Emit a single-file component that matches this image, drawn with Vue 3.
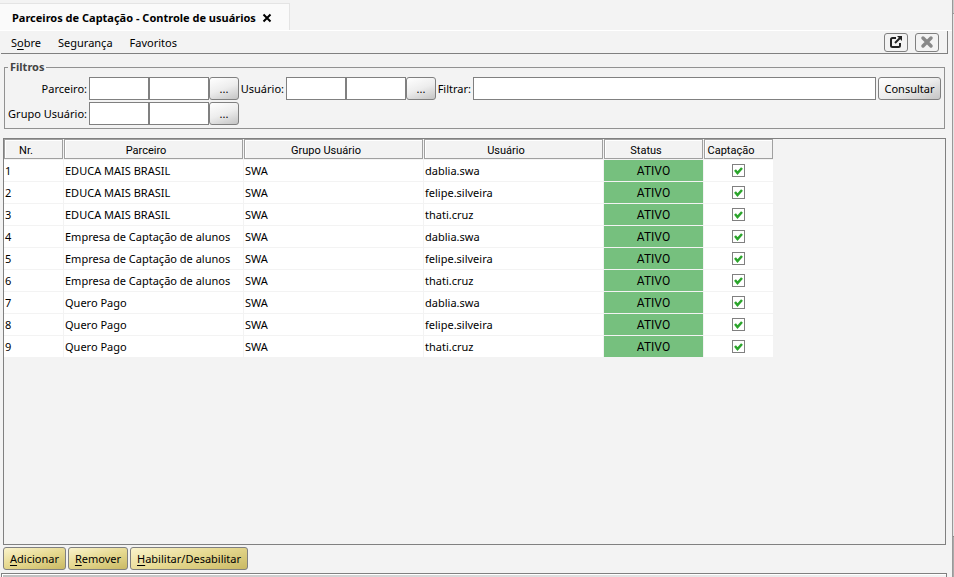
<script setup>
const rows = [
  ['EDUCA MAIS BRASIL', 'dablia.swa'],
  ['EDUCA MAIS BRASIL', 'felipe.silveira'],
  ['EDUCA MAIS BRASIL', 'thati.cruz'],
  ['Empresa de Captação de alunos', 'dablia.swa'],
  ['Empresa de Captação de alunos', 'felipe.silveira'],
  ['Empresa de Captação de alunos', 'thati.cruz'],
  ['Quero Pago', 'dablia.swa'],
  ['Quero Pago', 'felipe.silveira'],
  ['Quero Pago', 'thati.cruz'],
]
</script>

<template>
  <div class="window">
    <div class="main">
      <header class="tabs">
        <div class="tab">
          <span>Parceiros de Captação - Controle de usuários</span>
          <button class="tab-close" aria-label="Fechar aba">
            <svg width="10" height="10" viewBox="0 0 10 10"><path d="M1.500 1.500L8.500 8.500M8.500 1.500L1.500 8.500" stroke="#000" stroke-width="2" /></svg>
          </button>
        </div>
      </header>
      <div class="menubar">
        <nav class="menu">
          <a href="#">S<u>o</u>bre</a>
          <a href="#">Segurança</a>
          <a href="#">Favoritos</a>
        </nav>
        <div class="tools">
          <button class="tool" aria-label="Abrir em nova janela">
            <svg width="14" height="14" viewBox="0 0 14 14" fill="none" stroke="#222" stroke-width="2"><path d="M7 3H3.500Q2 3 2 4.500V10.500Q2 12 3.500 12H9.500Q11 12 11 10.500V8" /><path d="M6 8L11 3" /><path d="M8 1H13V6Z" fill="#222" stroke="none" /></svg>
          </button>
          <button class="tool" aria-label="Fechar">
            <svg width="14" height="14" viewBox="0 0 14 14"><path d="M3 3L11 11M11 3L3 11" stroke="#888" stroke-width="3.500" stroke-linecap="round" /></svg>
          </button>
        </div>
      </div>

      <fieldset class="filters">
        <legend>Filtros</legend>
        <div class="filter-row">
          <label class="first" for="parceiro">Parceiro:</label>
          <input id="parceiro" class="code" type="text" /><input class="code" type="text" aria-label="Nome do parceiro" />
          <button class="btn pick" aria-label="Buscar parceiro">...</button>
          <label class="second" for="usuario">Usuário:</label>
          <input id="usuario" class="code" type="text" /><input class="code" type="text" aria-label="Nome do usuário" />
          <button class="btn pick" aria-label="Buscar usuário">...</button>
          <label class="third" for="filtrar">Filtrar:</label>
          <input id="filtrar" class="search" type="text" />
          <button class="btn consult">Consultar</button>
        </div>
        <div class="filter-row">
          <label class="first" for="grupo">Grupo Usuário:</label>
          <input id="grupo" class="code" type="text" /><input class="code" type="text" aria-label="Nome do grupo" />
          <button class="btn pick" aria-label="Buscar grupo">...</button>
        </div>
      </fieldset>

      <div class="grid-panel">
        <table>
          <colgroup><col class="c-nr" /><col class="c-wide" /><col class="c-wide" /><col class="c-wide" /><col class="c-status" /><col class="c-cap" /></colgroup>
          <thead>
            <tr><th><span>Nr.</span></th><th><span>Parceiro</span></th><th><span>Grupo Usuário</span></th><th><span>Usuário</span></th><th><span>Status</span></th><th><span>Captação</span></th></tr>
          </thead>
          <tbody>
            <tr v-for="(r, i) in rows" :key="i">
              <td>{{ i + 1 }}</td>
              <td>{{ r[0] }}</td>
              <td>SWA</td>
              <td>{{ r[1] }}</td>
              <td class="status">ATIVO</td>
              <td class="cap"><label class="check"><input type="checkbox" checked :aria-label="'Captação ' + (i + 1)" /><svg width="9" height="9" viewBox="0 0 9 9"><path d="M1 4L3.500 7L8 2" fill="none" stroke="#2ba52b" stroke-width="2.500" /></svg></label></td>
            </tr>
          </tbody>
        </table>
      </div>

      <div class="actions">
        <button class="btn gold"><u>A</u>dicionar</button>
        <button class="btn gold"><u>R</u>emover</button>
        <button class="btn gold"><u>H</u>abilitar/Desabilitar</button>
      </div>
      <div class="footer"></div>
    </div>
    <div class="edge"><div class="edge-top"></div><div class="edge-mid"></div><div class="edge-low"></div></div>
  </div>
</template>

<style>
body { background: #f3f3f3; }
</style>

<style scoped>
* { box-sizing: border-box; }
.window {
  display: flex;
  min-height: 100vh;
  background: #f3f3f3;
  color: #000;
  font: 11px/16px "Noto Sans", "Open Sans", sans-serif;
}
.main { flex: 1; min-width: 0; display: flex; flex-direction: column; }
button, input { font: inherit; color: inherit; margin: 0; }
button { padding: 0; }
.tabs { display: flex; padding-top: 3px; border-bottom: 1px solid #fff; }
.tab {
  display: flex;
  align-items: center;
  gap: 6px;
  height: 27px;
  padding: 2px 17px 0 12px;
  background: #fafafa;
  border: 1px solid #e4e4e4;
  border-width: 1px 1px 0 0;
  font-weight: 700;
  white-space: nowrap;
}
.tab-close { border: 0; background: none; display: flex; }
.menubar {
  display: flex;
  justify-content: space-between;
  align-items: center;
  height: 23px;
  margin: 0 4px 0 1px;
  border: 1px solid #808080;
  border-width: 0 1px 1px 0;
}
.menu { display: flex; gap: 17px; padding: 2px 0 0 10px; }
.menu a { color: inherit; text-decoration: none; }
u { text-underline-offset: 2px; }
.tools { display: flex; gap: 7px; padding-right: 8px; }
.tool {
  display: flex;
  align-items: center;
  justify-content: center;
  width: 24px;
  height: 19px;
  border: 1px solid #808080;
  border-radius: 3px;
  background: #f3f3f3;
}
.filters {
  margin: 5px 7px 0 4px;
  padding: 2px 3px 3px;
  border: 1px solid #919191;
  min-width: 0;
}
.filters legend { padding: 0 2px; font-weight: 700; color: #444; }
.filter-row { display: flex; align-items: center; }
.filter-row + .filter-row { margin-top: 2px; }
.filter-row label { flex: none; white-space: nowrap; text-align: right; padding-right: 2px; }
.first { width: 81px; }
.second { width: 47px; }
.third { width: 37px; }
.code, .search { height: 23px; border: 1px solid #808080; background: #fff; padding: 0 3px; }
.code { width: 60px; }
.search { flex: 1; min-width: 0; margin-right: 2px; }
.btn {
  height: 23px;
  border: 1px solid #808080;
  border-radius: 3px;
  background: linear-gradient(160deg, #fff, #ededed 50%, #c4c4c4);
  white-space: nowrap;
}
.pick { width: 30px; }
.consult { width: 63px; }
.grid-panel {
  flex: 1;
  margin: 9px 6px 0 3px;
  border: 1px solid #808080;
}
table { border-collapse: separate; border-spacing: 0; table-layout: fixed; width: 770px; }
.c-nr { width: 60px; }
.c-wide { width: 180px; }
.c-status { width: 100px; }
.c-cap { width: 70px; }
th {
  height: 21px;
  padding: 0 1px 1px 0;
  font: 11px/16px Roboto, "Liberation Sans", sans-serif;
}
th span { display: block; height: 20px; padding: 3px 15px 0 0; border: 1px solid #a0a0a0; box-shadow: inset 1px 1px #fff; line-height: 15px; }
td {
  height: 22px;
  padding: 0 1px;
  background: #fff;
  border: 1px solid #f3f3f3;
  border-width: 0 1px 1px 0;
  white-space: nowrap;
}
.status { background: #76c07e; text-align: center; font-family: Roboto, sans-serif; font-size: 12px; }
.cap { text-align: center; }
.check { position: relative; display: block; width: 13px; height: 13px; margin: 0 auto; }
.check input { appearance: none; display: block; width: 13px; height: 13px; border: 1px solid #808080; background: #fff; }
.check svg { position: absolute; left: 2px; top: 2px; pointer-events: none; }
.actions { display: flex; gap: 2px; padding: 2px 3px 3px; }
.gold { padding: 0 6px; background: linear-gradient(165deg, #faf3cc, #e6d990 50%, #c9b964); }
.footer { height: 4px; margin: 0 5px 0 1px; border: 1px solid #808080; border-bottom: 0; background: linear-gradient(90deg, #c0c0c0, #f3f3f3); box-shadow: inset 1px 1px #fff; }
.edge { width: 2px; display: flex; flex-direction: column; border-left: 1px solid #999; }
.edge-top { height: 14px; background: #ccc; border-bottom: 1px solid #999; }
.edge-mid { flex: 1; background: #e4e4e4; }
.edge-low { height: 41px; background: #aaa; border-top: 1px solid #888; }
</style>
